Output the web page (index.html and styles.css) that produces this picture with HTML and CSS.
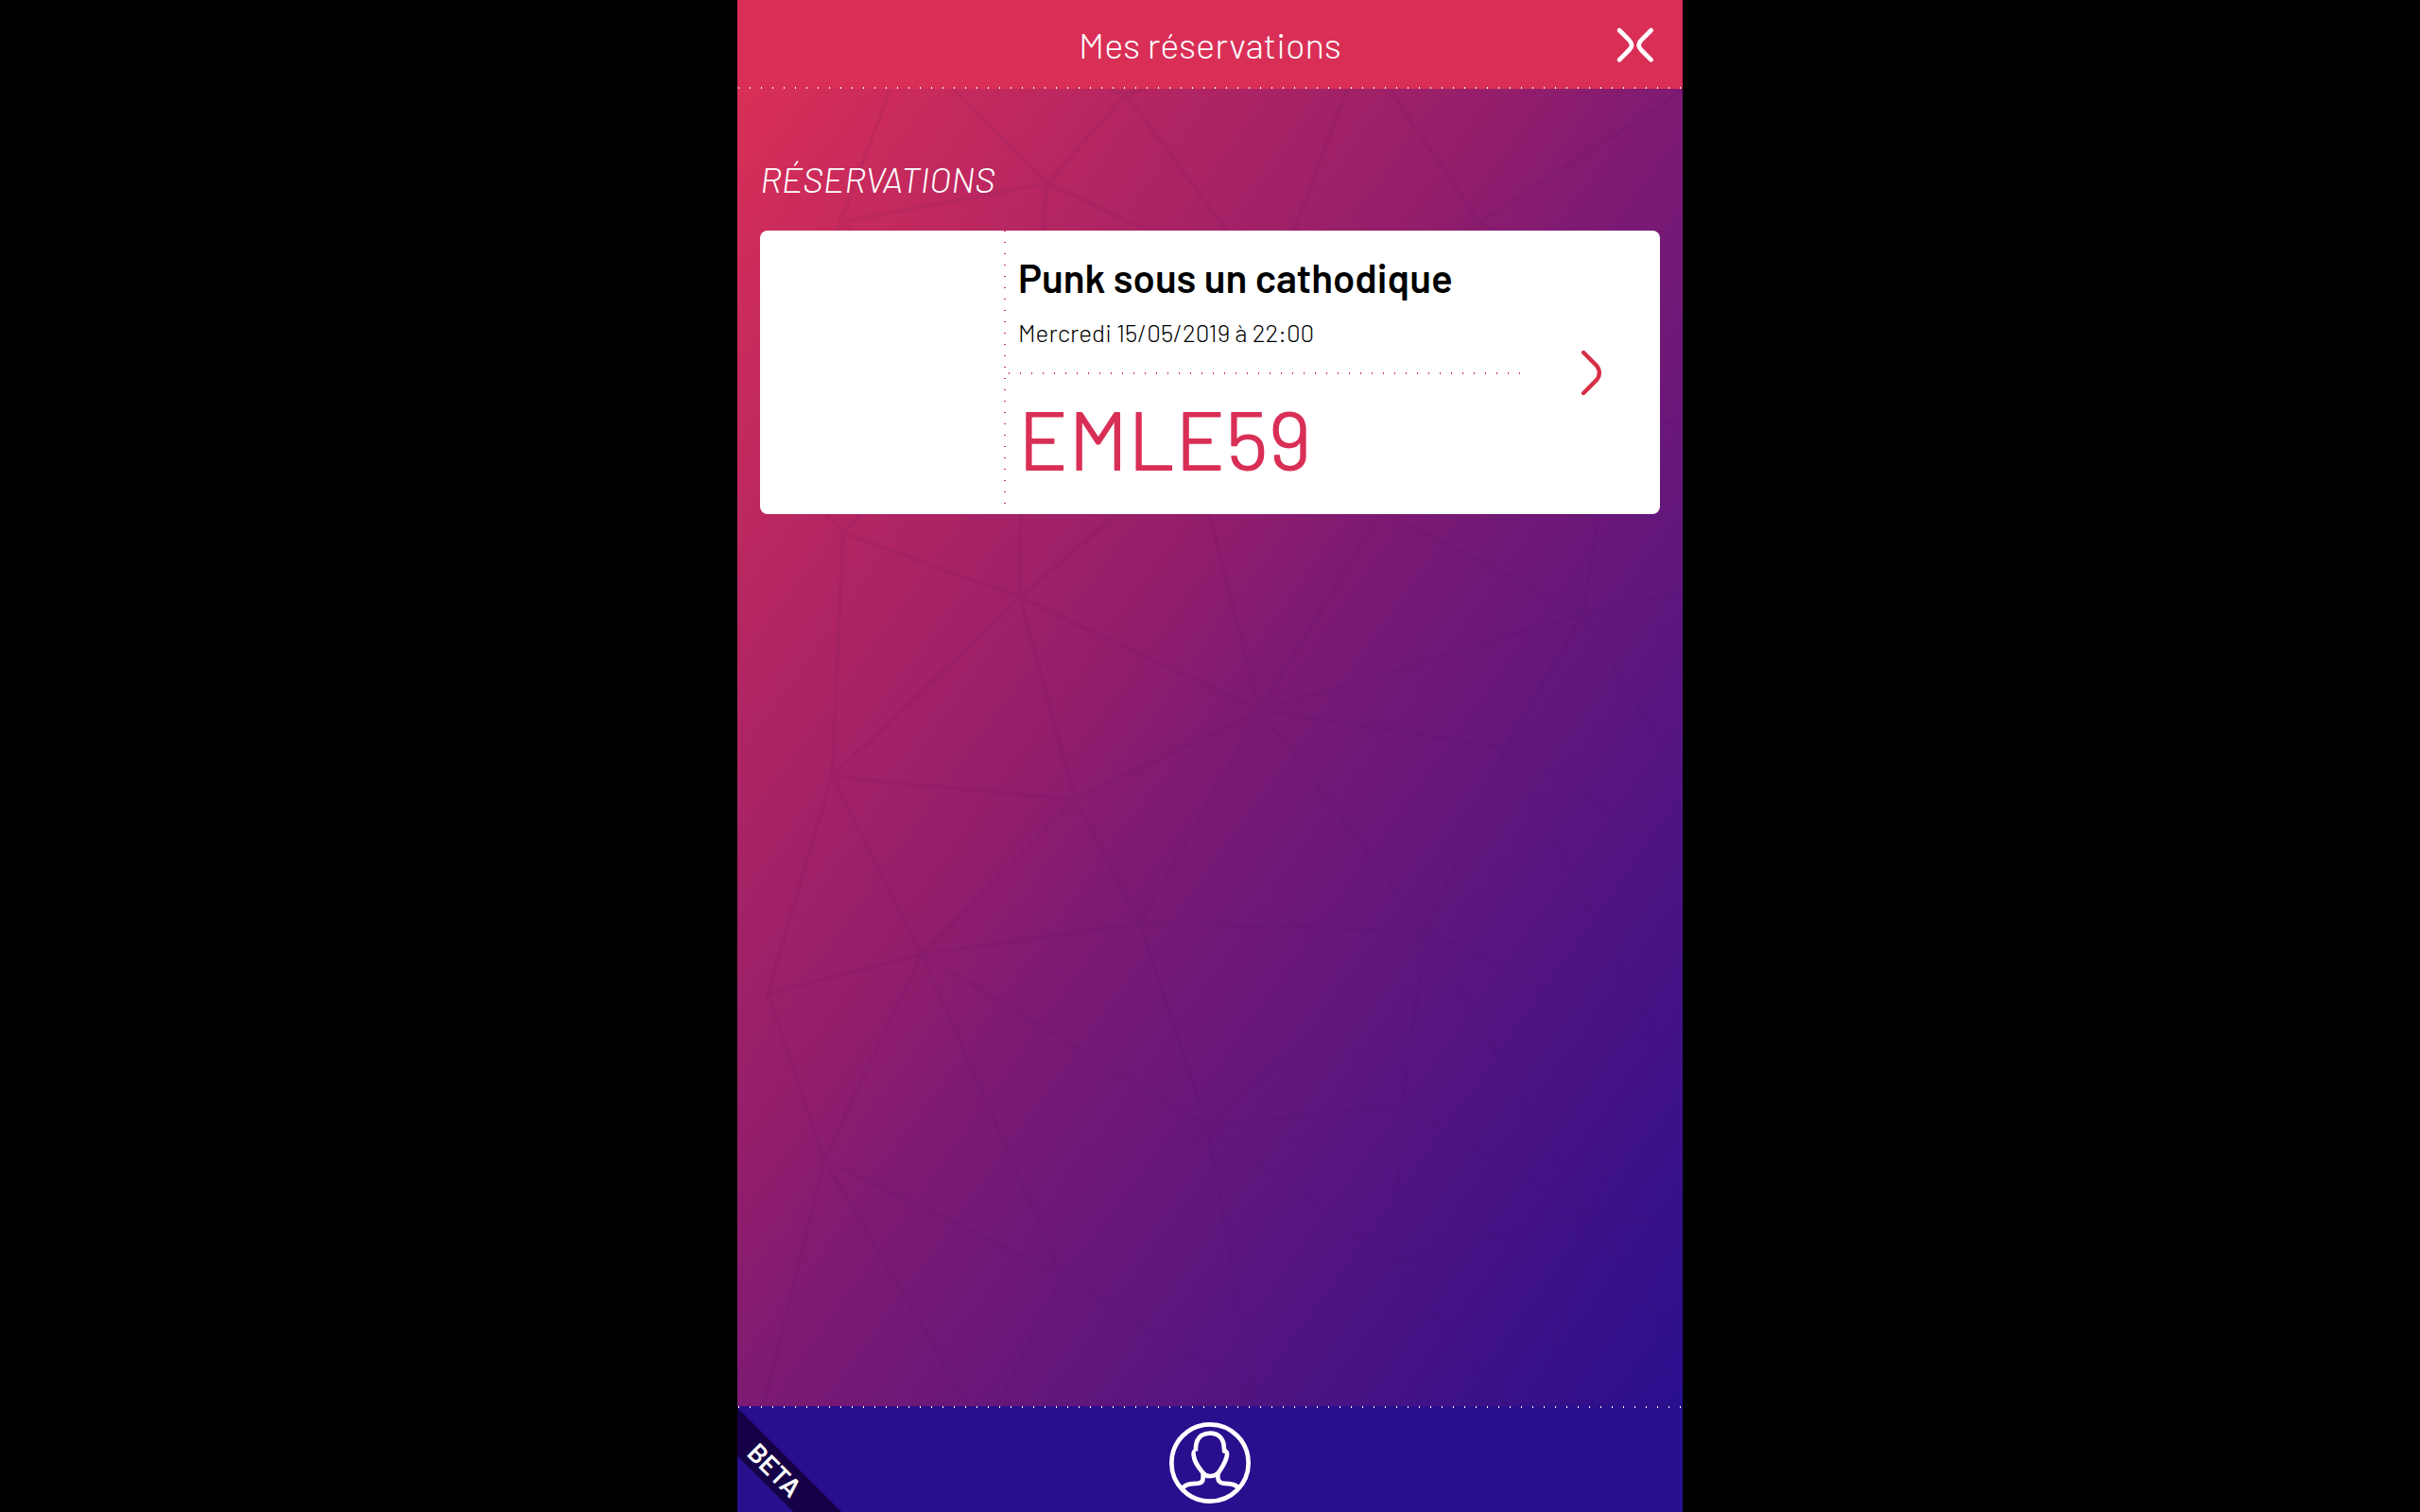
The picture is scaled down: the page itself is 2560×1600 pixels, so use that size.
FILE: index.html
```html
<!DOCTYPE html>
<html lang="fr">
<head>
<meta charset="utf-8">
<meta name="viewport" content="width=device-width, initial-scale=1">
<title>Mes réservations</title>
<link rel="stylesheet" href="styles.css">
</head>
<body>
<div class="app">
  <header class="header">
    <h1 class="header-title">Mes réservations</h1>
    <button class="close" type="button" aria-label="Fermer">
      <svg class="close-icon" viewBox="1316 84 126 120" aria-hidden="true"><path d="M1328 99L1359 130Q1375 146 1359 162L1328 193M1429 99L1398 130Q1382 146 1398 162L1429 193"/></svg>
    </button>
  </header>

  <main class="content">
    <svg class="mesh" viewBox="0 94 1000 1394" preserveAspectRatio="none" aria-hidden="true">
      <path d="M162 94L109 235L328 194L228 94M328 194L411 100L393 94M411 100L433 94M328 194L323 244M328 194L435 244M411 100L518 244M109 235L107 244M109 235L123 244M645 94L589 244M690 94L785 236L1000 96M785 236L763 244M785 236L803 244M976 450L1000 441"/>
      <path d="M94 544L112 564L131 544M112 564L299 632L300 544M299 632L402 544M112 564L100 822L299 632L357 846L553 752L299 632M499 544L553 752L679 544M689 544L894 650L911 544M894 650L1000 627M553 752L894 650L814 791L553 752M894 650L1000 825M100 822L357 846L195 1010L100 822L32 1052L195 1010L426 977L357 846M553 752L426 977L729 985L553 752M814 791L729 985M1000 905L814 791L976 1103L729 985"/>
      <path d="M426 977L497 1192L729 985L703 1169L497 1192L195 1010L92 1227L32 1052M195 1010L344 1350L92 1227L245 1488M92 1227L28 1488M729 985L899 1285L703 1169L694 1334L497 1192L548 1477L344 1350L497 1192M344 1350L274 1488M899 1285L694 1334L548 1477L475 1488M548 1477L612 1488M694 1334L813 1488M851 1488L899 1285L1000 1427M976 1103L899 1285L1000 1290M976 1103L1000 1105M976 1103L1000 1125M912 1488L1000 1443"/>
    </svg>
    <h2 class="section-title">Réservations</h2>
    <a class="card" href="#">
      <span class="card-picture"></span>
      <span class="card-body">
        <span class="card-info">
          <strong class="card-name">Punk sous un cathodique</strong>
          <span class="card-date">Mercredi 15/05/2019 à 22:00</span>
        </span>
        <span class="card-code">EMLE59</span>
      </span>
      <span class="card-arrow">
        <svg class="arrow-icon" viewBox="98 92 68 146" aria-hidden="true"><path d="M107 101L149 143Q165 165 149 187L107 229"/></svg>
      </span>
    </a>
  </main>

  <footer class="footer">
    <a class="profile" href="#" aria-label="Mon profil">
      <svg class="profile-icon" viewBox="78 71 264 264" aria-hidden="true">
        <circle cx="210" cy="203" r="122"/>
        <path d="M122 285Q130 272 148 270L172 268Q188 266 188 250V238M235 238V250Q236 266 252 268L276 270Q292 272 302 285"/>
        <path d="M165 166C162 126 182 109 210 109S257 126 255 166Q265 164 264 178C261 200 250 214 238 233Q226 246 210 245Q196 246 186 233C172 214 160 200 158 178Q157 164 165 166"/>
      </svg>
    </a>
    <span class="beta">BETA</span>
  </footer>
</div>
</body>
</html>
```
FILE: styles.css
```css
* {
  box-sizing: border-box;
}

body {
  margin: 0;
  background: #000;
  font-family: Barlow, Roboto, sans-serif;
  font-weight: 400;
}

.app {
  display: flex;
  flex-direction: column;
  width: 100%;
  max-width: 1000px;
  min-height: 100vh;
  margin: 0 auto;
}

.header {
  display: grid;
  grid-template-columns: 1fr auto 1fr;
  align-items: center;
  padding: 23px 29px;
  color: #fff;
  background:
    repeating-linear-gradient(90deg, transparent 0 1px, #fff 1px 2px, transparent 2px 12px) bottom / 100% 2px no-repeat,
    #d92f57;
}

.header-title {
  grid-column: 2;
  margin: 0;
  font-size: 38px;
  line-height: 48px;
  font-weight: 300;
}

.close {
  justify-self: end;
  display: flex;
  padding: 0;
  border: 0;
  background: none;
  color: inherit;
  cursor: pointer;
}

.close-icon {
  width: 42px;
  height: 40px;
  fill: none;
  stroke: currentColor;
  stroke-width: 14;
  stroke-linecap: round;
}

.content {
  position: relative;
  flex: 1;
  padding: 71px 24px 24px;
  background: linear-gradient(to bottom right, #d92f57, #911d6c 42%, #7e1a73 50%, #290f8e);
}

.mesh {
  position: absolute;
  inset: 0;
  width: 100%;
  height: 100%;
  fill: none;
  stroke: #4b1060;
  stroke-opacity: 0.07;
  stroke-width: 4;
}

.section-title {
  position: relative;
  margin: 0 0 31px;
  color: #fff;
  font-size: 38px;
  line-height: 48px;
  font-weight: 300;
  font-style: italic;
  text-transform: uppercase;
}

.card {
  position: relative;
  display: grid;
  grid-template-columns: 258px 1fr 148px;
  min-height: 300px;
  border-radius: 8px;
  background: #fff;
  color: #000;
  text-decoration: none;
}

.card-body {
  display: flex;
  flex-direction: column;
  padding: 23px 0 24px 4px;
  background: repeating-linear-gradient(#d92f57 0 1px, transparent 1px 12px) left / 2px 100% no-repeat;
}

.card-info {
  display: flex;
  flex-direction: column;
  gap: 17px;
  padding: 0 11px 28px;
  background: repeating-linear-gradient(90deg, transparent 0 1px, #d92f57 1px 2px, transparent 2px 12px) bottom / 100% 2px no-repeat;
}

.card-name {
  font-size: 42px;
  line-height: 52px;
  font-weight: 600;
}

.card-date {
  font-size: 26px;
  line-height: 32px;
  font-weight: 300;
}

.card-code {
  padding: 15px 11px 0;
  color: #d92f57;
  font-size: 88px;
  line-height: 104px;
}

.card-arrow {
  display: flex;
  align-items: center;
  padding-left: 64px;
}

.arrow-icon {
  width: 23px;
  height: 49px;
  fill: none;
  stroke: #d62f45;
  stroke-width: 13;
  stroke-linecap: round;
}

.footer {
  position: relative;
  display: flex;
  justify-content: center;
  padding: 16px 0 8px;
  overflow: hidden;
  background:
    repeating-linear-gradient(90deg, transparent 0 1px, #fff 1px 2px, transparent 2px 12px) top / 100% 2px no-repeat,
    #290f8e;
}

.profile {
  display: flex;
  color: #fff;
}

.profile-icon {
  width: 88px;
  height: 88px;
  fill: none;
  stroke: currentColor;
  stroke-width: 14;
  stroke-linejoin: round;
}

.beta {
  position: absolute;
  left: -60px;
  top: 49px;
  width: 200px;
  transform: rotate(45deg);
  background: #160347;
  color: #fff;
  font-size: 28px;
  line-height: 36px;
  font-weight: 600;
  text-align: center;
}
```
